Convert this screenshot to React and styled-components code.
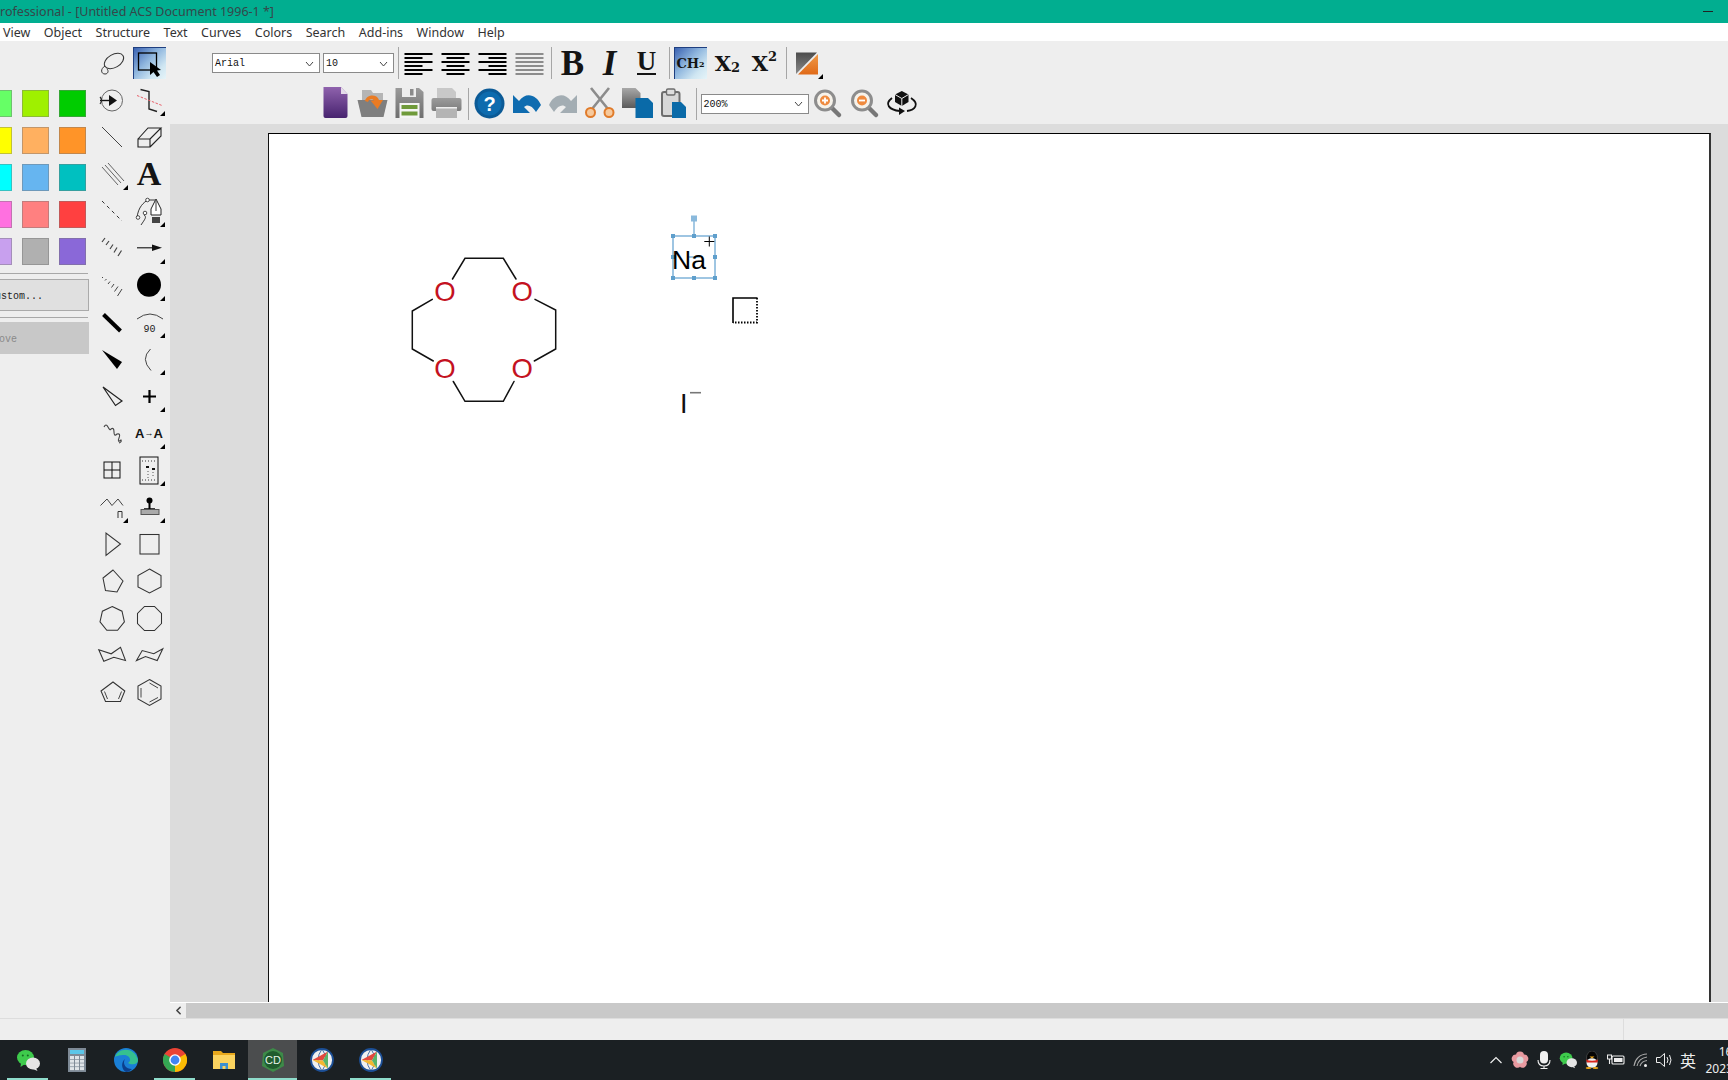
import React from 'react';
import styled, { createGlobalStyle } from 'styled-components';
import { ChevronLeft } from 'lucide-react';

const GlobalStyle = createGlobalStyle`
    html, body {
        margin: 0;
        padding: 0;
        background: #eeeeee;
        overflow: hidden;
    }
    * {
        box-sizing: border-box;
    }
`;

const Window = styled.div`
    display: flex;
    flex-direction: column;
    width: 1728px;
    height: 1080px;
    overflow: hidden;
    font-family: "Noto Sans", sans-serif;
`;

const TitleBar = styled.div`
    display: flex;
    align-items: center;
    justify-content: space-between;
    flex: none;
    height: 23px;
    padding-right: 15px;
    background: #01ae90;
    color: #35474a;
    font-size: 12.5px;
    white-space: nowrap;
`;

const TitleText = styled.span`
    margin-left: -76px;
`;

const Minimize = styled.span`
    width: 10px;
    height: 1px;
    background: #222;
`;

const MenuBar = styled.div`
    display: flex;
    align-items: center;
    gap: 13.5px;
    flex: none;
    height: 18px;
    padding-left: 3px;
    background: #fff;
    color: #333;
    font-size: 12.5px;
`;

const Main = styled.div`
    display: flex;
    flex: 1;
    min-height: 0;
`;

const LeftPanel = styled.div`
    display: flex;
    flex: none;
    width: 170px;
    background: #eeeeee;
`;

const Palette = styled.div`
    flex: none;
    width: 93.5px;
    padding-top: 49px;
    overflow: hidden;
`;

const SwatchGrid = styled.div`
    display: grid;
    grid-template-columns: repeat(3, 27px);
    grid-auto-rows: 27px;
    gap: 10px;
    margin-left: -15px;
`;

const Swatch = styled.div`
    background: ${(p) => p.$color};
    border: 1px solid rgba(120, 120, 120, 0.45);
`;

const PaletteRule = styled.div`
    height: 1px;
    width: 88px;
    margin: ${(p) => p.$margin};
    background: #a8a8a8;
`;

const PaletteButton = styled.div`
    width: 104px;
    height: 32px;
    margin-left: -15px;
    padding-left: ${(p) => p.$pad}px;
    padding-top: 2px;
    background: ${(p) => (p.$disabled ? '#c8c8c8' : '#e0e0e0')};
    border: 1px solid ${(p) => (p.$disabled ? '#c8c8c8' : '#aaaaaa')};
    color: ${(p) => (p.$disabled ? '#8a8a8a' : '#222')};
    font-family: "Liberation Mono", monospace;
    font-size: 10px;
    line-height: 30px;
    white-space: nowrap;
    text-indent: ${(p) => p.$indent || 0}px;
`;

const ToolGrid = styled.div`
    display: grid;
    grid-template-columns: repeat(2, 37px);
    grid-auto-rows: 37px;
    align-content: start;
    padding-top: 3.5px;
`;

const Cell = styled.div`
    position: relative;
    flex: none;
    width: 37px;
    height: 37px;

    ${(p) => p.$active && `
        &::before {
            content: "";
            position: absolute;
            inset: 2.5px 2px;
            background: linear-gradient(135deg, #3a62b2 0%, #8fb6de 42%, #cfe6f2 75%, #e6f4f8 100%);
            border-left: 1px solid #1f3f80;
            border-top: 1px solid #1f3f80;
        }
    `}

    ${(p) => p.$corner && `
        &::after {
            content: "";
            position: absolute;
            right: 3px;
            bottom: 3px;
            border-left: 5px solid transparent;
            border-bottom: 5px solid #000;
        }
    `}

    svg {
        position: relative;
        display: block;
    }
`;

const Side = styled.div`
    display: flex;
    flex-direction: column;
    flex: 1;
    min-width: 0;
`;

const Toolbars = styled.div`
    flex: none;
    height: 83px;
    background: #eeeeee;
`;

const ToolRow = styled.div`
    display: flex;
    align-items: center;
    height: ${(p) => p.$height}px;
    padding-left: ${(p) => p.$pad}px;
`;

const Combo = styled.div`
    display: flex;
    align-items: center;
    justify-content: space-between;
    flex: none;
    width: ${(p) => p.$w}px;
    height: ${(p) => p.$h}px;
    margin-left: ${(p) => p.$ml || 0}px;
    padding: 1px 5px 0 2px;
    background: #fff;
    border: 1px solid #8a8a8a;
    color: #111;
    font-family: "Liberation Mono", monospace;
    font-size: 10px;
`;

const Divider = styled.div`
    flex: none;
    width: 1px;
    height: ${(p) => p.$h || 32}px;
    margin: 0 ${(p) => p.$right}px 0 ${(p) => p.$left}px;
    background: #a6a6a6;
`;

const Letter = styled.div`
    position: relative;
    display: flex;
    align-items: center;
    justify-content: center;
    width: 100%;
    height: 100%;
    color: #141414;
    font-family: ${(p) => p.$family || '"Liberation Serif", serif'};
    font-size: ${(p) => p.$size}px;
    font-weight: 700;
    font-style: ${(p) => (p.$italic ? 'italic' : 'normal')};
    line-height: 1;
`;

const Underlined = styled.span`
    padding-bottom: 1px;
    border-bottom: 2.5px solid #141414;
    line-height: 21px;
`;

const Sub = styled.span`
    font-size: 0.62em;
    transform: translateY(${(p) => p.$y}px);
`;

const TinyArrow = styled.span`
    font-size: 9px;
    font-weight: 400;
`;

const Canvas = styled.div`
    flex: 1;
    min-height: 0;
    padding: 9px 0 0 98px;
    overflow: hidden;
    background: #dcdcdc;
`;

const Page = styled.div`
    width: 1443px;
    height: 1200px;
    background: #fff;
    border-top: 1px solid #000;
    border-left: 1px solid #111;
    border-right: 2px solid #333;

    svg {
        display: block;
    }
`;

const ScrollBar = styled.div`
    display: flex;
    flex: none;
    height: 16px;
    border-top: 1px solid #fff;
`;

const ScrollArrow = styled.div`
    display: flex;
    align-items: center;
    justify-content: center;
    flex: none;
    width: 16px;
    background: #eeeeee;
    color: #444;
`;

const ScrollTrack = styled.div`
    flex: 1;
    background: #c9c9c9;
`;

const StatusBar = styled.div`
    display: flex;
    justify-content: flex-end;
    flex: none;
    height: 22px;
    background: #eeeeee;
    border-top: 1px solid #dddddd;
`;

const StatusPane = styled.div`
    width: 105px;
    border-left: 1px solid #dddddd;
`;

const Taskbar = styled.div`
    display: flex;
    align-items: stretch;
    flex: none;
    height: 40px;
    background: #1b2023;
    overflow: hidden;
`;

const TaskList = styled.div`
    display: flex;
    flex: 1;
    padding-left: 3px;
`;

const Task = styled.div`
    position: relative;
    display: flex;
    align-items: center;
    justify-content: center;
    flex: none;
    width: 49px;
    background: ${(p) => (p.$active ? '#4b4d4e' : 'transparent')};

    ${(p) => p.$open && `
        &::after {
            content: "";
            position: absolute;
            bottom: 0;
            left: ${p.$active ? 0 : 4}px;
            right: ${p.$active ? 0 : 4}px;
            height: 2px;
            background: #8fdccb;
        }
    `}
`;

const Tray = styled.div`
    display: flex;
    flex: none;
`;

const TrayItem = styled.div`
    display: flex;
    align-items: center;
    justify-content: center;
    width: 24px;
    color: #eee;
    font-family: "Noto Sans CJK SC", sans-serif;
    font-size: 16px;
`;

const ClockBox = styled.div`
    flex: none;
    width: 28px;
`;

const Clock = styled.div`
    width: 60px;
    margin-left: 4px;
    padding-top: 3px;
    color: #eee;
    font-size: 12px;
    line-height: 17px;
    text-align: center;
    white-space: nowrap;
`;

const Icon = ({ size = 37, view = 37, children }) => (
    <svg width={size} height={size} viewBox={`0 0 ${view} ${view}`} fill="none" stroke="none">
        {children}
    </svg>
);

const Stroke = ({ d, w = 1.1, c = '#222' }) => <path d={d} stroke={c} strokeWidth={w} fill="none" />;

const polygon = (cx, cy, r, n, start) =>
    Array.from({ length: n }, (_, i) => {
        const a = start + (i * 2 * Math.PI) / n;
        return `${(cx + r * Math.cos(a)).toFixed(1)},${(cy + r * Math.sin(a)).toFixed(1)}`;
    }).join(' ');

const Poly = ({ points, w = 1.05 }) => <polygon points={points} stroke="#333" strokeWidth={w} fill="none" />;

const SWATCHES = [
    '#66ff66', '#9ff000', '#00cc00',
    '#ffff00', '#ffb060', '#ff9428',
    '#00ffff', '#66b5f0', '#00c0c0',
    '#ff70e0', '#ff8080', '#ff4040',
    '#c8a0ee', '#b0b0b0', '#8a68d8',
];

const TOOLS = [
    { icon: <Icon><ellipse cx="20" cy="16" rx="10.5" ry="6.5" transform="rotate(-30 20 16)" stroke="#333" strokeWidth="1" /><Stroke d="M11 21 C6 24 7 29 11 29 C14 29 15 26 13 24" c="#333" w="1" /></Icon> },
    { active: true, icon: <Icon><rect x="7.5" y="8" width="18" height="17" stroke="#000" strokeWidth="1.3" /><path d="M19 17 L19 30 L22.5 27 L26 32 L29 30 L26 25.5 L30 25 Z" fill="#000" /></Icon> },
    { icon: <Icon><circle cx="18" cy="18.5" r="10.5" stroke="#666" strokeWidth="1" /><path d="M6 18.5 H16" stroke="#111" strokeWidth="1.4" /><path d="M15 13 L23 18.5 L15 24 Z" fill="#111" /><Stroke d="M6 15 Q9 18 6 22" /></Icon> },
    { corner: true, icon: <Icon><Stroke d="M9.5 7.5 L18 9.5 V27 L26 29.5" w="1.4" /><path d="M6 13.5 L31 23.5" stroke="#e8606a" strokeWidth="1" strokeDasharray="2.5 1.5" /></Icon> },
    { icon: <Icon><Stroke d="M8 8 L28 28" c="#444" w="1" /></Icon> },
    { icon: <Icon><Stroke d="M7 20 H19 V28 H7 Z M7 20 L17 9 H30 L19 20 M30 9 V17 L19 28" w="1.1" /></Icon> },
    { corner: true, icon: <Icon><Stroke d="M8 11 L24 29 M11 9 L27 27 M14 7 L30 25" c="#555" w=".9" /></Icon> },
    { icon: <Letter $size={34}>A</Letter> },
    { icon: <Icon><path d="M8 8 L28 28" stroke="#333" strokeWidth="1" strokeDasharray="3.5 3.5" /></Icon> },
    { corner: true, icon: <Icon><Stroke d="M6 25 C7 14 13 9 17 7 L24 7" w=".9" /><Stroke d="M10 32 C14 26 16 24 13 22" w=".9" /><circle cx="16.5" cy="7" r="1.8" fill="#fff" stroke="#222" strokeWidth=".8" /><circle cx="7" cy="24.5" r="1.8" fill="#fff" stroke="#222" strokeWidth=".8" /><circle cx="14" cy="20" r="1.8" fill="#fff" stroke="#222" strokeWidth=".8" /><path d="M25 6 L30 16 V22 H20 V16 Z" fill="#fff" stroke="#222" strokeWidth="1" /><path d="M25 8 V18" stroke="#222" strokeWidth=".9" /><rect x="21" y="24" width="8" height="6" fill="#444" /></Icon> },
    { icon: <Icon><Stroke d="M8 12 L11 8 M12 15 L15 11 M16 19 L19 14.5 M20 22.5 L23 17.5 M24 26 L27.5 20.5" w="1.2" c="#444" /></Icon> },
    { corner: true, icon: <Icon><path d="M6 17.8 H24" stroke="#111" strokeWidth="1.1" /><path d="M21 14.5 L31 17.8 L21 21 Z" fill="#111" /></Icon> },
    { icon: <Icon><Stroke d="M8 11 L9 10 M11 13.5 L12.5 12 M14 17 L16 14.5 M17.5 20.5 L20 17 M20.5 24.5 L24 19.5 M23.5 29 L28 22" w="1" c="#444" /></Icon> },
    { corner: true, icon: <Icon><circle cx="18" cy="17.8" r="12" fill="#000" /></Icon> },
    { icon: <Icon><path d="M9.5 10.5 L26.5 27" stroke="#000" strokeWidth="4" /></Icon> },
    { corner: true, icon: <Icon><Stroke d="M6 15 Q19 5 32 15" c="#444" w="1" /><text x="18.5" y="28" textAnchor="middle" fontFamily="Liberation Mono, monospace" fontSize="10" fill="#222">90</text></Icon> },
    { icon: <Icon><path d="M8 9 L28 21 L23 28 Z" fill="#000" /></Icon> },
    { corner: true, icon: <Icon><Stroke d="M19.5 8 Q9 18 20 29.5" c="#444" w="1" /></Icon> },
    { icon: <Icon><path d="M9 9 L28 23 L21.5 27.5 Z" stroke="#222" strokeWidth="1.2" fill="none" /></Icon> },
    { corner: true, icon: <Icon><path d="M18.5 12 V25 M12 18.5 H25" stroke="#000" strokeWidth="2.2" /></Icon> },
    { icon: <Icon><Stroke d="M10 12 Q12 8 14 12 T17 14 Q20 12 20 17 T23 19 Q27 18 25 23 T27 25 Q28 27 25 28" c="#444" w="1.1" /></Icon> },
    { corner: true, icon: <Letter $size={13} $family={'"Liberation Sans", sans-serif'}>A<TinyArrow>→</TinyArrow>A</Letter> },
    { icon: <Icon><rect x="10" y="10" width="16" height="16" stroke="#111" strokeWidth="1" /><path d="M18 10 V26 M10 18 H26" stroke="#111" strokeWidth="1" /></Icon> },
    { corner: true, icon: <Icon><rect x="9" y="5" width="18" height="27" stroke="#111" strokeWidth="1" /><path d="M11 9 H25 M11 28 H25" stroke="#333" strokeWidth="1" strokeDasharray="1 2" /><path d="M15 14 h3 v2 h-3 Z M21 16 h3 v2 h-3 Z" fill="#111" /><path d="M17 19 V26 M22 20 V26" stroke="#555" strokeWidth="1" strokeDasharray="1 2" /></Icon> },
    { corner: true, icon: <Icon><Stroke d="M6.5 16.5 L13 10 L18 16.5 L24 10 L29 16.5" c="#444" w="1" /><Stroke d="M24 29 V22.5 H28 V29" c="#333" w="1" /></Icon> },
    { corner: true, icon: <Icon><circle cx="18.5" cy="11.5" r="3" fill="#000" /><path d="M18.5 13 V20" stroke="#000" strokeWidth="2" /><path d="M13 20 H24" stroke="#000" strokeWidth="1.5" /><rect x="10" y="20.5" width="18" height="5" fill="#aaa" stroke="#555" strokeWidth="1" /></Icon> },
    { icon: <Icon><Poly points="12,7 12,29.5 26.5,18" /></Icon> },
    { icon: <Icon><rect x="9" y="8.5" width="19" height="19.5" stroke="#333" strokeWidth="1.05" /></Icon> },
    { icon: <Icon><Poly points="19,7 29,18 23,29 11.5,27.5 9,15" /></Icon> },
    { icon: <Icon><Poly points="18.5,6 30,12.5 30,24 18.5,30 7,24 7,12.5" /></Icon> },
    { icon: <Icon><Poly points={polygon(18.2, 19, 12.5, 7, -Math.PI / 2)} /></Icon> },
    { icon: <Icon><Poly points={polygon(18.5, 18.5, 13, 8, Math.PI / 8)} /></Icon> },
    { icon: <Icon><Poly points="4.8,12.8 17.2,16.8 26.5,10.2 31.5,23.5 19.8,20.2 9.8,24.2" /></Icon> },
    { icon: <Icon><Poly points="5.5,23.5 11.2,13.5 22.8,16.8 31.8,11.8 26.2,23.5 14.5,19.5" /></Icon> },
    { icon: <Icon><Poly points="19,8 30.8,17 26.5,27.5 11.5,27.5 7,17" /><Stroke d="M10.5 17.5 L13.5 25 M27.5 17.5 L24.5 25" c="#333" w=".9" /></Icon> },
    { icon: <Icon><Poly points="18.5,5.5 30,12 30,25 18.5,31.5 7,25 7,12" /><Stroke d="M10 14 V23.5 M18.5 9 L27 14 M27 23.5 L18.5 28" c="#333" w=".9" /></Icon> },
];

const AlignIcon = ({ type, color = '#000' }) => {
    const rows = [0, 1, 2, 3, 4, 5].map((i) => {
        const full = i % 2 === 0 || type === 'full';
        const w = full ? 28 : 18;
        const x = type === 'left' || full ? 4.5 : type === 'center' ? 9.5 : 14.5;
        return <rect key={i} x={x} y={8 + i * 4} width={w} height="2" fill={color} />;
    });
    return <Icon>{rows}</Icon>;
};

const Chevron = () => (
    <svg width="9" height="6" viewBox="0 0 9 6" fill="none">
        <path d="M1 1 L4.5 5 L8 1" stroke="#444" strokeWidth="1" />
    </svg>
);

const DocSheet = ({ x, y, w, h, fill }) => (
    <path d={`M${x} ${y} H${x + w - 5} L${x + w} ${y + 5} V${y + h} H${x} Z`} fill={fill} />
);

const Magnifier = ({ plus }) => (
    <Icon>
        <path d="M22 22 L30 30" stroke="#777" strokeWidth="4.5" strokeLinecap="round" />
        <circle cx="16" cy="15.5" r="9.5" fill="#f6f2ea" stroke="#8d8d8d" strokeWidth="3" />
        <circle cx="16" cy="15.5" r="5" fill="#ef8a3e" />
        <path d={plus ? 'M13 15.5 H19 M16 12.5 V18.5' : 'M13 15.5 H19'} stroke="#fff" strokeWidth="1.8" />
    </Icon>
);

const GradientStops = ({ id, from, to }) => (
    <linearGradient id={id} x1="0" y1="0" x2="0" y2="1">
        <stop offset="0" stopColor={from} />
        <stop offset="1" stopColor={to} />
    </linearGradient>
);

const NewDocIcon = () => (
    <Icon>
        <defs><GradientStops id="docPurple" from="#8f62ad" to="#47236f" /></defs>
        <path d="M6.5 2 H24 L30.5 9 V31 Q30.5 33 28.5 33 H8.5 Q6.5 33 6.5 31 Z" fill="url(#docPurple)" />
        <path d="M24 2 L30.5 9 H24 Z" fill="#e5dcea" />
    </Icon>
);

const OpenIcon = () => (
    <Icon>
        <path d="M8 5 H17 L19 8 H29 V15 H8 Z" fill="#b5b5b5" />
        <path d="M3.5 15 H33.5 L29.5 32 H7.5 Z" fill="#7f7f7f" />
        <path d="M11 16 C13 9 23 9 25 15 H29 L23.5 24 L16.5 15.5 H20 C18.5 13.5 15 13.5 14 17 Z" fill="#ea7b23" />
    </Icon>
);

const SaveIcon = () => (
    <Icon>
        <defs><GradientStops id="saveGrey" from="#9a9a9a" to="#6e6e6e" /></defs>
        <path d="M4.5 3 H28 L32.5 7 V33 H4.5 Z" fill="url(#saveGrey)" />
        <rect x="11" y="3" width="14" height="9" fill="#ededed" />
        <rect x="19" y="4" width="3.5" height="6.5" fill="#8a8a8a" />
        <rect x="8.5" y="18" width="20" height="15" fill="#f4f4f4" />
        <rect x="10.5" y="20" width="16" height="4" fill="#6f9a3a" />
        <rect x="10.5" y="26.5" width="16" height="4" fill="#6f9a3a" />
    </Icon>
);

const PrintIcon = () => (
    <Icon>
        <defs><GradientStops id="printGrey" from="#9c9c9c" to="#7c7c7c" /></defs>
        <path d="M9 3 H24 L28 7 V14 H9 Z" fill="#c8c8c8" />
        <rect x="3.5" y="13" width="30" height="13" rx="2" fill="url(#printGrey)" />
        <rect x="8" y="23" width="21" height="10" fill="#b4b4b4" />
        <rect x="8" y="22" width="21" height="1.5" fill="#eee" />
    </Icon>
);

const HelpIcon = () => (
    <Icon>
        <circle cx="18.5" cy="18.5" r="15" fill="#0b5a96" />
        <circle cx="18.5" cy="18.5" r="12" fill="#0d6bae" />
        <text x="18.5" y="25.5" textAnchor="middle" fontFamily="Liberation Sans, sans-serif" fontWeight="700" fontSize="20" fill="#fff">?</text>
    </Icon>
);

const ARROW = 'M32 10 V28 H15 L21 22 C18 19 13 20 9 27 L4 20 C8 10 19 6 26 16 Z';

const UndoIcon = () => <Icon><path d={ARROW} fill="#0f6cb0" transform="translate(37) scale(-1 1)" /></Icon>;
const RedoIcon = () => <Icon><path d={ARROW} fill="#a3adb3" /></Icon>;

const ScissorsIcon = () => (
    <Icon>
        <path d="M9 3 L26 24 M27 3 L10 24" stroke="#8c8c8c" strokeWidth="2.6" />
        <circle cx="8.5" cy="27.5" r="4.5" fill="#f6c99c" stroke="#e07b2a" strokeWidth="2" />
        <circle cx="27" cy="27.5" r="4.5" fill="#f6c99c" stroke="#e07b2a" strokeWidth="2" />
    </Icon>
);

const CopyIcon = () => (
    <Icon>
        <defs><GradientStops id="copyGrey" from="#a8a8a8" to="#5a5a5a" /></defs>
        <DocSheet x={3} y={3} w={18.5} h={20} fill="url(#copyGrey)" />
        <DocSheet x={16.5} y={13} w={17.5} h={20} fill="#0a6aa8" />
    </Icon>
);

const PasteIcon = () => (
    <Icon>
        <rect x="6" y="7" width="17.5" height="24" rx="2" fill="#d8d8d8" stroke="#6e6e6e" strokeWidth="2" />
        <rect x="10.5" y="4" width="8.5" height="6" rx="1.5" fill="#dedede" stroke="#6e6e6e" strokeWidth="1.4" />
        <DocSheet x={16} y={17} w={14} h={16} fill="#0a6aa8" />
    </Icon>
);

const CubeIcon = () => (
    <Icon>
        <path d="M18.8 6 L25.5 9.5 V17 L18.8 21 L12 17 V9.5 Z" fill="#111" />
        <path d="M18.8 13.5 V21 M12 9.5 L18.8 13.5 L25.5 9.5" stroke="#eee" strokeWidth="1" />
        <Stroke d="M9 13 C1 19 6 25 17 26 M28 13 C37 19 32 25 24 26" w="1.8" c="#111" />
        <path d="M16 22.5 L22 26 L16 30 Z" fill="#111" />
    </Icon>
);

const ColorIcon = () => (
    <Icon>
        <defs>
            <GradientStops id="colorDark" from="#4c4c4c" to="#8a8a8a" />
            <GradientStops id="colorOrange" from="#f09a48" to="#e06a18" />
        </defs>
        <path d="M7 7.5 H28 L7 29 Z" fill="url(#colorDark)" />
        <path d="M29 9 V29.5 H9 Z" fill="url(#colorOrange)" />
    </Icon>
);

const BondLines = () => (
    <g stroke="#111" strokeWidth="1.5" strokeLinecap="round" fill="none">
        <path d="M452.5 279 L465 258.3 H503.3 L516 279" />
        <path d="M535 299.3 L555.7 310 V349 L534.3 361" />
        <path d="M514 381.5 L503.3 401.3 H465 L453.3 381.5" />
        <path d="M433.3 361 L412.3 349 V311 L432.3 299.3" />
    </g>
);

const AtomLabel = ({ x, y, children }) => (
    <text x={x} y={y} textAnchor="middle" fontFamily="Liberation Sans, sans-serif" fontSize="27.5" fill="#c4121f">
        {children}
    </text>
);

const HANDLES = [
    [673, 236], [694, 236], [715, 236],
    [673, 257], [715, 257],
    [673, 278], [694, 278], [715, 278],
];

const Drawing = () => (
    <svg width="1440" height="870" viewBox="269 134 1440 870">
        <BondLines />
        <AtomLabel x={445} y={300.5}>O</AtomLabel>
        <AtomLabel x={522.3} y={300.5}>O</AtomLabel>
        <AtomLabel x={445} y={377.5}>O</AtomLabel>
        <AtomLabel x={522.3} y={377.5}>O</AtomLabel>

        <rect x="673" y="236" width="42" height="42" stroke="#7fb3d9" strokeWidth="1.5" fill="none" />
        <path d="M694 218 V236 M688 257 H700" stroke="#7fb3d9" strokeWidth="1.4" />
        <rect x="691" y="215.5" width="6" height="6" fill="#8ab9dc" />
        {HANDLES.map(([x, y]) => (
            <rect key={`${x}-${y}`} x={x - 2} y={y - 2} width="4" height="4" fill="#5f9fcc" />
        ))}
        <text x="672" y="269" fontFamily="Liberation Sans, sans-serif" fontSize="26.5" fill="#000">Na</text>
        <path d="M704.3 241.5 H714.3 M709.3 236.5 V246.5" stroke="#000" strokeWidth="1" />

        <path d="M733 323 V298 H757.5" stroke="#000" strokeWidth="1.6" fill="none" />
        <path d="M757 298 V322.5 H733" stroke="#000" strokeWidth="1.8" strokeDasharray="1.5 1.5" fill="none" />

        <text x="680" y="413" fontFamily="Liberation Sans, sans-serif" fontSize="27" fill="#111">I</text>
        <path d="M690 392.7 H701" stroke="#777" strokeWidth="1.6" />
    </svg>
);

const WeChat = ({ size }) => (
    <Icon size={size} view={24}>
        <ellipse cx="9.5" cy="9.5" rx="8.5" ry="7.5" fill="#3ecb4c" />
        <path d="M5 15 L4.5 19 L9 16 Z" fill="#3ecb4c" />
        <circle cx="6.8" cy="7.5" r="1" fill="#156b22" />
        <circle cx="11.8" cy="7.5" r="1" fill="#156b22" />
        <ellipse cx="17" cy="15.5" rx="7" ry="6" fill="#e4e4e4" />
        <path d="M20 20 L21.5 23 L17 21 Z" fill="#e4e4e4" />
    </Icon>
);

const CalcIcon = () => (
    <Icon size={24} view={24}>
        <rect x="3" y="0" width="18" height="24" fill="#7e8a96" />
        <rect x="5" y="2" width="14" height="4" fill="#5cc6e8" />
        {[0, 1, 2].map((c) => [0, 1, 2, 3].map((r) => (
            <rect key={`${c}${r}`} x={5 + c * 5} y={8 + r * 3.7} width="4" height="3" fill="#dfe4e8" />
        )))}
    </Icon>
);

const EdgeIcon = () => (
    <Icon size={24} view={24}>
        <circle cx="12" cy="12" r="12" fill="#1a7fd6" />
        <path d="M1 9 C4 0 20 -2 24 12 C24 17 17 17 14 15 C18 13 16 7 10 7 C6 7 2 8 1 9 Z" fill="#35c08f" />
        <path d="M12 24 C7 21 7 14 11 11 C8 16 12 21 18 21 C16 23 14 24 12 24 Z" fill="#0c3f8c" />
    </Icon>
);

const ChromeIcon = () => (
    <Icon size={24} view={24}>
        <circle cx="12" cy="12" r="12" fill="#ea4335" />
        <path d="M12 12 L1.6 6 A12 12 0 0 0 12 24 L18 13.5 Z" fill="#34a853" />
        <path d="M12 12 L22.4 6 A12 12 0 0 1 12 24 Z" fill="#fbbc04" />
        <circle cx="12" cy="12" r="5.8" fill="#fff" />
        <circle cx="12" cy="12" r="4.4" fill="#4285f4" />
    </Icon>
);

const FolderIcon = () => (
    <Icon size={24} view={24}>
        <path d="M1 3 H9 L11 5 H23 V21 H1 Z" fill="#e8a81c" />
        <path d="M1 7 H23 V21 H1 Z" fill="#fbd35f" />
        <path d="M8 21 V15 H16 V21 H13.5 V18 H10.5 V21 Z" fill="#3c8fd0" />
    </Icon>
);

const CdIcon = () => (
    <Icon size={24} view={24}>
        <polygon points="12,0 22,5 23,18 12,24 1,18 2,5" fill="#3d8a48" />
        <circle cx="12" cy="12" r="9" fill="#1f5c2e" />
        <text x="12" y="16" textAnchor="middle" fontFamily="Liberation Sans, sans-serif" fontSize="11" fill="#e8f4e8">CD</text>
    </Icon>
);

const PrismIcon = () => (
    <Icon size={24} view={24}>
        <circle cx="12" cy="12" r="11" fill="#f0f0f0" stroke="#1c4f96" strokeWidth="1.8" />
        <path d="M12 1 Q4 12 12 23 M12 1 Q20 12 12 23" stroke="#1c4f96" strokeWidth=".8" fill="none" />
        <path d="M18 3.5 L2.5 12 L13 12.5 Z" fill="#e2483d" />
        <path d="M2.5 12 L13 12.5 L18 20.5 Z" fill="#f2b632" />
        <path d="M18 3.5 L13 12.5 L18 20.5 Z" fill="#58b368" />
    </Icon>
);

const FlowerIcon = () => (
    <Icon size={18} view={18}>
        {[0, 72, 144, 216, 288].map((a) => (
            <circle key={a} cx="9" cy="4.5" r="4" fill="#e89aa0" transform={`rotate(${a} 9 9)`} />
        ))}
        <circle cx="9" cy="9" r="3.5" fill="#d8d8d8" />
    </Icon>
);

const MicIcon = () => (
    <Icon size={18} view={18}>
        <rect x="5" y="0" width="8" height="12.5" rx="4" fill="#f0f0f0" />
        <path d="M3 9 Q3 15 9 15 Q15 15 15 9 M9 15 V17.5 M5.5 17.5 H12.5" stroke="#f0f0f0" strokeWidth="1.1" fill="none" />
    </Icon>
);

const QqIcon = () => (
    <Icon size={18} view={18}>
        <ellipse cx="9" cy="7" rx="5.5" ry="7" fill="#050505" stroke="#777" strokeWidth=".4" />
        <ellipse cx="9" cy="12" rx="5.5" ry="4.8" fill="#f2f2f2" />
        <path d="M3 8.5 Q9 11 15 8.5 L14.5 11.5 H4 Z" fill="#d9251d" />
        <path d="M6.5 5.5 L9 7.5 L11.5 5.5 Z" fill="#f0a818" />
        <ellipse cx="5.5" cy="17" rx="2.8" ry="1" fill="#f0a818" />
        <ellipse cx="12.5" cy="17" rx="2.8" ry="1" fill="#f0a818" />
    </Icon>
);

const BatteryIcon = () => (
    <Icon size={18} view={18}>
        <rect x="5" y="5" width="12" height="8" rx="1" stroke="#eee" strokeWidth="1.1" />
        <rect x="7" y="7" width="8.5" height="4" fill="#eee" />
        <path d="M0.5 4 H4.5 V8 H0.5 Z M2.5 8 V13" stroke="#eee" strokeWidth="1.1" />
    </Icon>
);

const WifiIcon = () => (
    <Icon size={18} view={18}>
        <g stroke="#aaa" strokeWidth="1.1" fill="none">
            <path d="M3 15 C4 8 9 3 16 3" />
            <path d="M6 15 C7 10 10 7 16 6" />
            <path d="M9 15 C10 12 12 10 16 9.5" />
        </g>
        <circle cx="14.5" cy="14.5" r="1.5" fill="#eee" />
    </Icon>
);

const SpeakerIcon = () => (
    <Icon size={18} view={18}>
        <path d="M1.5 6.5 H5 L9.5 2.5 V15.5 L5 11.5 H1.5 Z" stroke="#eee" strokeWidth="1" fill="none" />
        <path d="M12 6 Q14 9 12 12 M14.5 4 Q17.5 9 14.5 14" stroke="#eee" strokeWidth="1" fill="none" />
    </Icon>
);

const TrayChevron = () => (
    <Icon size={14} view={14}>
        <path d="M1.5 10 L7 4.5 L12.5 10" stroke="#eee" strokeWidth="1.2" fill="none" />
    </Icon>
);

const MENU = ['View', 'Object', 'Structure', 'Text', 'Curves', 'Colors', 'Search', 'Add-ins', 'Window', 'Help'];

const TASKS = [
    { icon: <WeChat size={24} />, open: true },
    { icon: <CalcIcon /> },
    { icon: <EdgeIcon /> },
    { icon: <ChromeIcon />, open: true },
    { icon: <FolderIcon /> },
    { icon: <CdIcon />, open: true, active: true },
    { icon: <PrismIcon /> },
    { icon: <PrismIcon />, open: true },
];

function App() {
    return (
        <Window>
            <GlobalStyle />
            <TitleBar>
                <TitleText>ChemDraw Professional - [Untitled ACS Document 1996-1 *]</TitleText>
                <Minimize />
            </TitleBar>
            <MenuBar>
                {MENU.map((item) => <span key={item}>{item}</span>)}
            </MenuBar>
            <Main>
                <LeftPanel>
                    <Palette>
                        <SwatchGrid>
                            {SWATCHES.map((color, i) => <Swatch key={i} $color={color} />)}
                        </SwatchGrid>
                        <PaletteRule $margin="8px 0 5px" />
                        <PaletteButton $pad={3}>Custom...</PaletteButton>
                        <PaletteRule $margin="6px 0 4px" />
                        <PaletteButton $pad={0} $disabled $indent={-5}>Remove</PaletteButton>
                    </Palette>
                    <ToolGrid>
                        {TOOLS.map((tool, i) => (
                            <Cell key={i} $corner={tool.corner} $active={tool.active}>{tool.icon}</Cell>
                        ))}
                    </ToolGrid>
                </LeftPanel>
                <Side>
                    <Toolbars>
                        <ToolRow $height={44} $pad={42}>
                            <Combo $w={108} $h={20}>Arial<Chevron /></Combo>
                            <Combo $w={71} $h={20} $ml={3}>10<Chevron /></Combo>
                            <Divider $left={4} $right={0.5} />
                            <Cell><AlignIcon type="left" /></Cell>
                            <Cell><AlignIcon type="center" /></Cell>
                            <Cell><AlignIcon type="right" /></Cell>
                            <Cell><AlignIcon type="full" color="#8c8c8c" /></Cell>
                            <Divider $left={3} $right={2.5} />
                            <Cell><Letter $size={35}>B</Letter></Cell>
                            <Cell><Letter $size={35} $italic>I</Letter></Cell>
                            <Cell><Letter $size={27}><Underlined>U</Underlined></Letter></Cell>
                            <Divider $left={3.5} $right={2.5} />
                            <Cell $active><Letter $size={13} $family={'"DejaVu Serif", serif'}>CH<Sub $y={1}>2</Sub></Letter></Cell>
                            <Cell><Letter $size={21} $family={'"DejaVu Serif", serif'}>X<Sub $y={5}>2</Sub></Letter></Cell>
                            <Cell><Letter $size={21} $family={'"DejaVu Serif", serif'}>X<Sub $y={-6}>2</Sub></Letter></Cell>
                            <Divider $left={3} $right={1.5} />
                            <Cell $corner><ColorIcon /></Cell>
                        </ToolRow>
                        <ToolRow $height={37} $pad={146.5}>
                            <Cell><NewDocIcon /></Cell>
                            <Cell><OpenIcon /></Cell>
                            <Cell><SaveIcon /></Cell>
                            <Cell><PrintIcon /></Cell>
                            <Divider $left={3} $right={2} />
                            <Cell><HelpIcon /></Cell>
                            <Cell><UndoIcon /></Cell>
                            <Cell><RedoIcon /></Cell>
                            <Cell><ScissorsIcon /></Cell>
                            <Cell><CopyIcon /></Cell>
                            <Cell><PasteIcon /></Cell>
                            <Divider $left={3.5} $right={3.5} />
                            <Combo $w={108} $h={20}>200%<Chevron /></Combo>
                            <Cell><Magnifier plus /></Cell>
                            <Cell><Magnifier /></Cell>
                            <Cell><CubeIcon /></Cell>
                        </ToolRow>
                    </Toolbars>
                    <Canvas>
                        <Page>
                            <Drawing />
                        </Page>
                    </Canvas>
                    <ScrollBar>
                        <ScrollArrow><ChevronLeft size={13} strokeWidth={3} /></ScrollArrow>
                        <ScrollTrack />
                    </ScrollBar>
                </Side>
            </Main>
            <StatusBar>
                <StatusPane />
            </StatusBar>
            <Taskbar>
                <TaskList>
                    {TASKS.map((task, i) => (
                        <Task key={i} $open={task.open} $active={task.active}>{task.icon}</Task>
                    ))}
                </TaskList>
                <Tray>
                    <TrayItem><TrayChevron /></TrayItem>
                    <TrayItem><FlowerIcon /></TrayItem>
                    <TrayItem><MicIcon /></TrayItem>
                    <TrayItem><WeChat size={18} /></TrayItem>
                    <TrayItem><QqIcon /></TrayItem>
                    <TrayItem><BatteryIcon /></TrayItem>
                    <TrayItem><WifiIcon /></TrayItem>
                    <TrayItem><SpeakerIcon /></TrayItem>
                    <TrayItem>英</TrayItem>
                </Tray>
                <ClockBox>
                    <Clock>16:20<br />2023/5/12</Clock>
                </ClockBox>
            </Taskbar>
        </Window>
    );
}

export default App;
